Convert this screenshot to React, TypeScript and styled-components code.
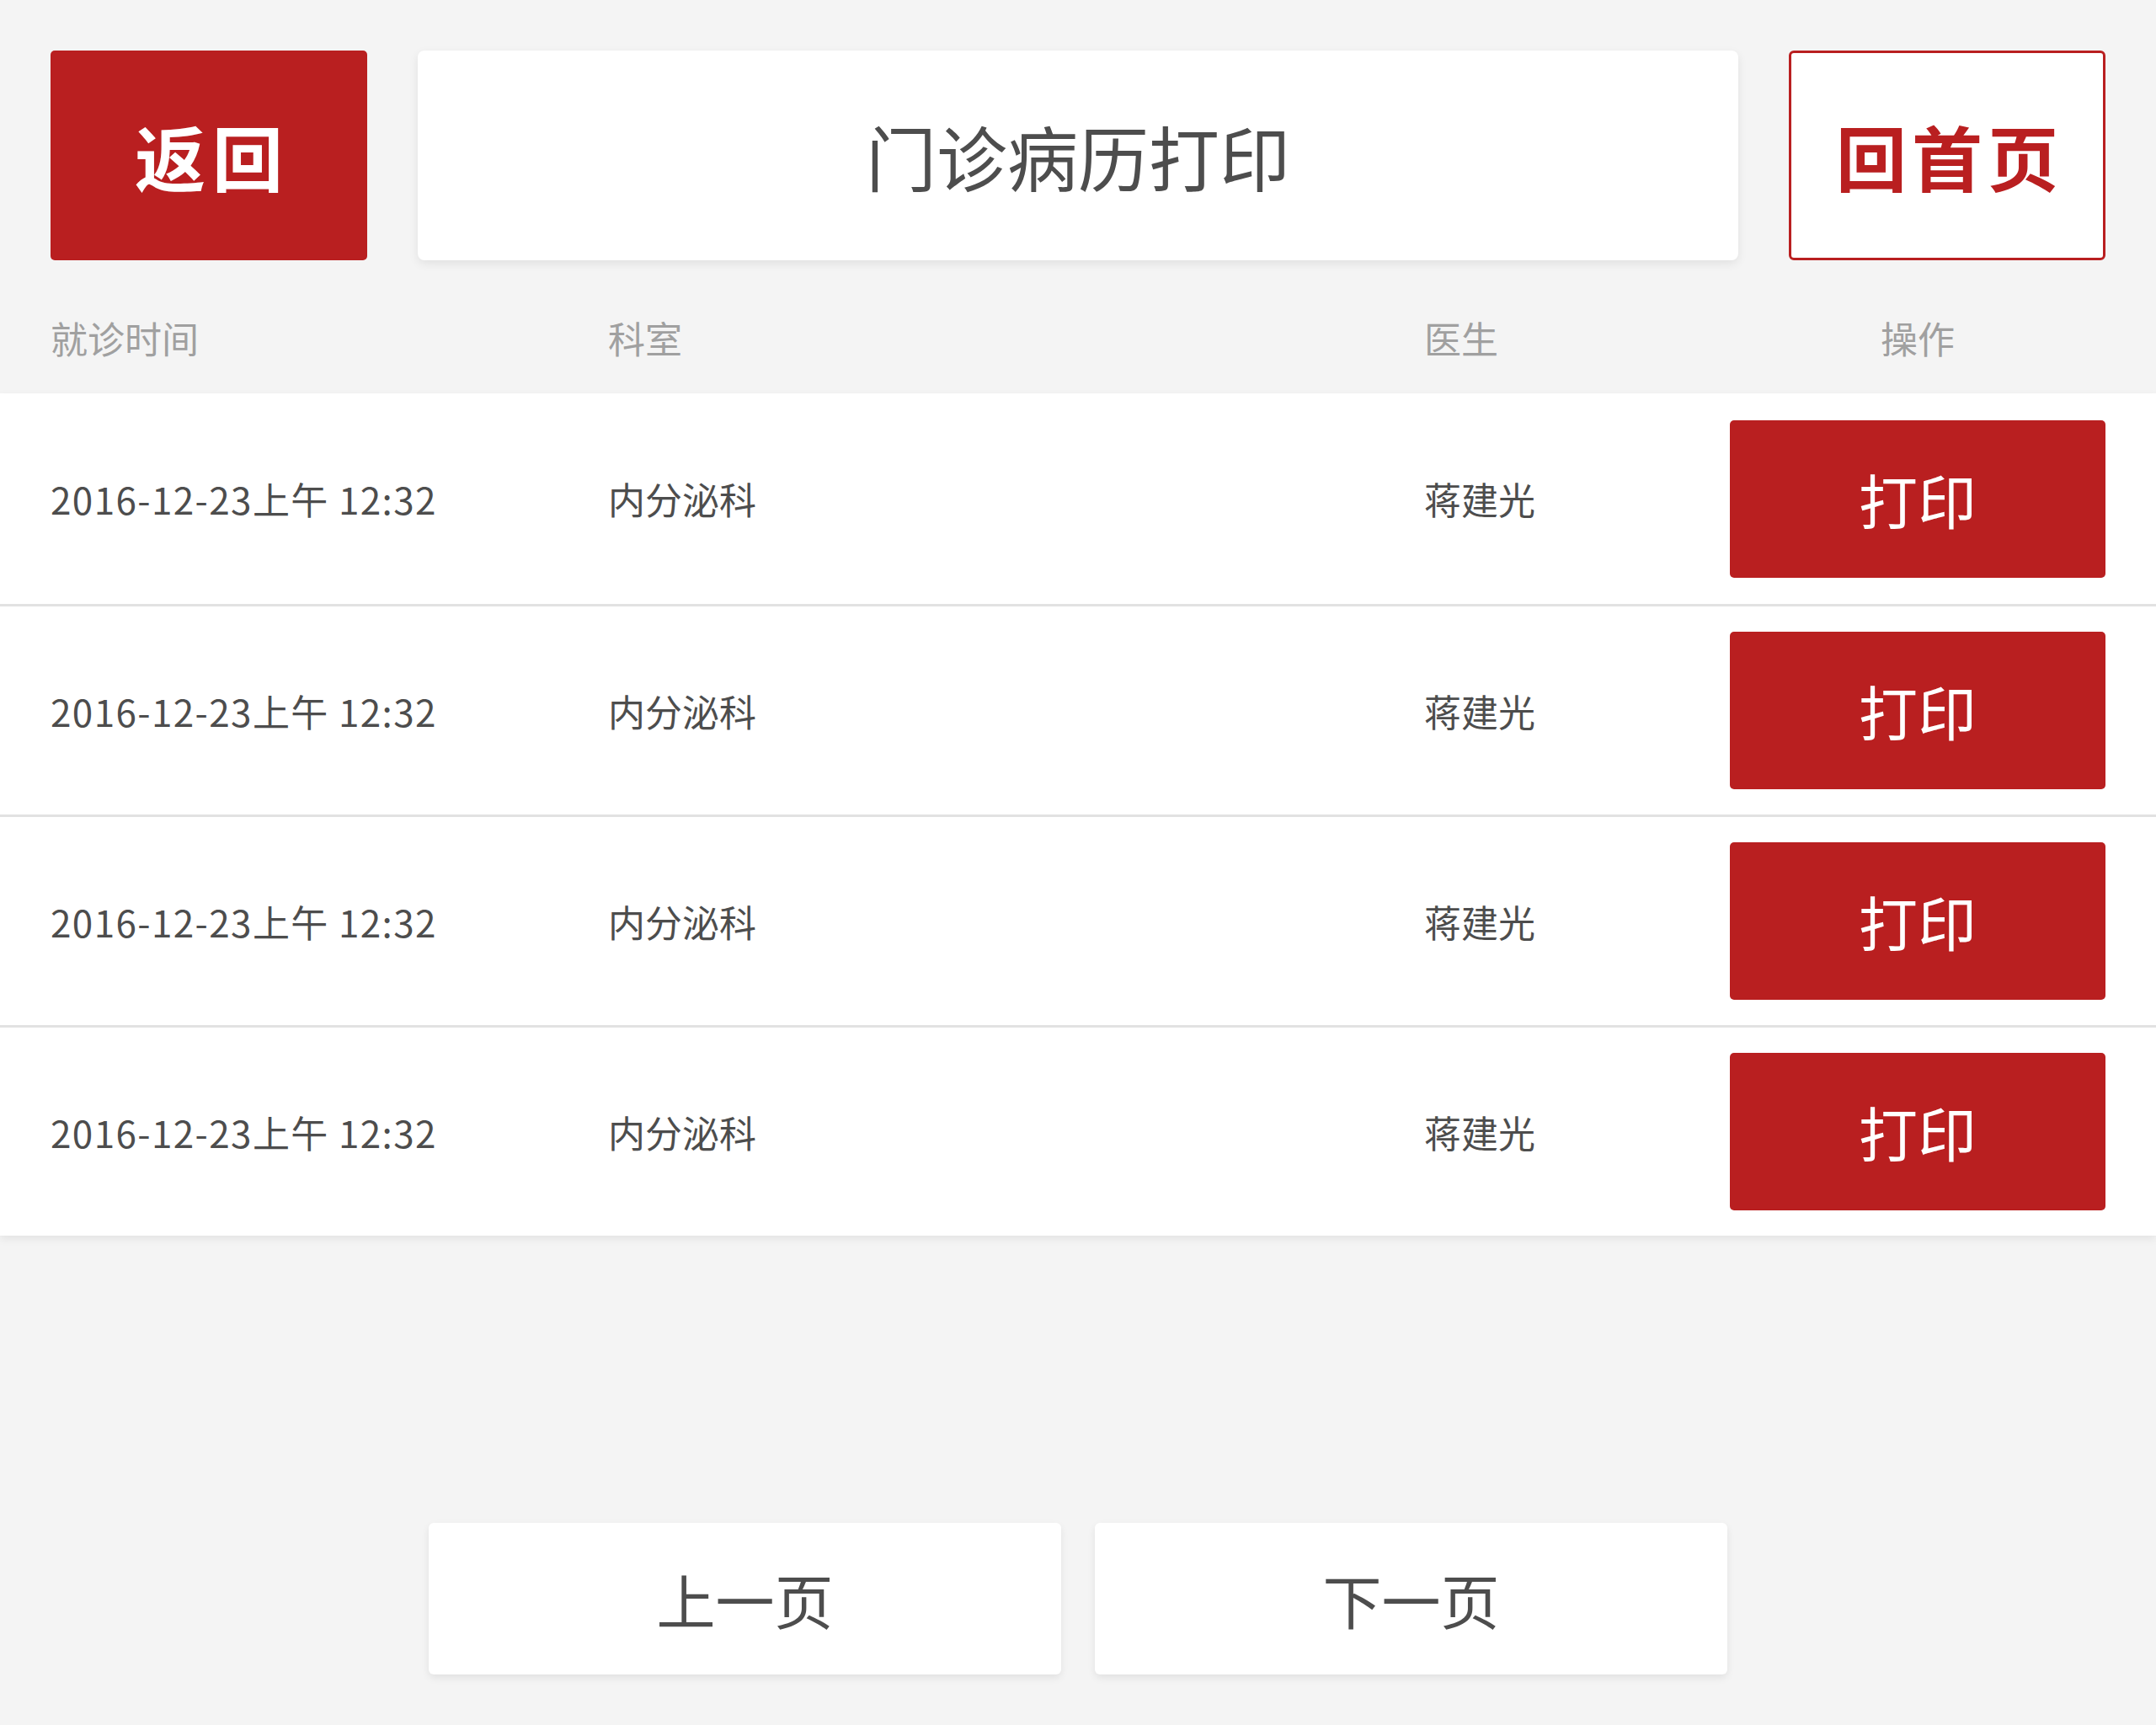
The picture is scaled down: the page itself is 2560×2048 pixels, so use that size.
import styled, { createGlobalStyle } from "styled-components";

const red = "#b91f20";
const ink = "#4d4d4d";

const GlobalStyle = createGlobalStyle`
  html, body {
    margin: 0;
    padding: 0;
    background: #f4f4f4;
  }
  * {
    box-sizing: border-box;
  }
  body {
    font-family: "Noto Sans CJK SC", "Noto Sans", sans-serif;
    color: ${ink};
  }
`;

const records = [
  { id: 1, time: "2016-12-23上午 12:32", dept: "内分泌科", doctor: "蒋建光" },
  { id: 2, time: "2016-12-23上午 12:32", dept: "内分泌科", doctor: "蒋建光" },
  { id: 3, time: "2016-12-23上午 12:32", dept: "内分泌科", doctor: "蒋建光" },
  { id: 4, time: "2016-12-23上午 12:32", dept: "内分泌科", doctor: "蒋建光" },
];

const App = () => {
  return (
    <>
      <GlobalStyle />
      <Page>
        <TopBar>
          <BackButton>返回</BackButton>
          <TitleBox>门诊病历打印</TitleBox>
          <HomeButton>回首页</HomeButton>
        </TopBar>

        <HeadRow>
          <HeadCell>就诊时间</HeadCell>
          <HeadCell>科室</HeadCell>
          <HeadCell>医生</HeadCell>
          <HeadCell $center>操作</HeadCell>
        </HeadRow>

        <Table>
          {records.map((item) => {
            return (
              <Row key={item.id}>
                <Cell $spaced>{item.time}</Cell>
                <Cell>{item.dept}</Cell>
                <Cell>{item.doctor}</Cell>
                <PrintButton>打印</PrintButton>
              </Row>
            );
          })}
        </Table>

        <Pager>
          <PageButton>上一页</PageButton>
          <PageButton>下一页</PageButton>
        </Pager>
      </Page>
    </>
  );
};

const Page = styled.div`
  display: flex;
  flex-direction: column;
  min-height: 100vh;
  padding-bottom: 60px;
`;

const TopBar = styled.header`
  display: grid;
  grid-template-columns: 376px 1fr 376px;
  gap: 60px;
  height: 249px;
  margin: 60px 60px 0 60px;
`;

const BackButton = styled.div`
  display: flex;
  align-items: center;
  justify-content: center;
  background: ${red};
  color: #fff;
  border-radius: 5px;
  font-size: 84px;
  font-weight: bold;
  letter-spacing: 8px;
  text-indent: 8px;
`;

const TitleBox = styled.div`
  display: flex;
  align-items: center;
  justify-content: center;
  background: #fff;
  border-radius: 8px;
  box-shadow: 0 4px 12px rgba(0, 0, 0, 0.08);
  font-size: 84px;
  color: ${ink};
`;

const HomeButton = styled.div`
  display: flex;
  align-items: center;
  justify-content: center;
  background: #fff;
  border: 3px solid ${red};
  border-radius: 6px;
  color: ${red};
  font-size: 84px;
  font-weight: bold;
  letter-spacing: 6px;
  text-indent: 6px;
`;

const columns = "662px 969px 1fr 446px";

const HeadRow = styled.div`
  display: grid;
  grid-template-columns: ${columns};
  align-items: center;
  height: 158px;
  padding: 26px 60px 0 60px;
`;

const HeadCell = styled.div<{ $center?: boolean }>`
  font-size: 44px;
  color: #a0a0a0;
  text-align: ${(p) => (p.$center ? "center" : "left")};
`;

const Table = styled.section`
  background: #fff;
  box-shadow: 0 4px 10px rgba(0, 0, 0, 0.07);
`;

const Row = styled.div`
  display: grid;
  grid-template-columns: ${columns};
  align-items: center;
  height: 250px;
  padding: 0 60px;
  & + & {
    border-top: 3px solid #e2e2e2;
  }
`;

const Cell = styled.div<{ $spaced?: boolean }>`
  font-size: 44px;
  color: ${ink};
  letter-spacing: ${(p) => (p.$spaced ? "1.4px" : "0")};
`;

const PrintButton = styled.div`
  display: flex;
  align-items: center;
  justify-content: center;
  height: 187px;
  background: ${red};
  border-radius: 5px;
  color: #fff;
  font-size: 70px;
`;

const Pager = styled.footer`
  display: flex;
  justify-content: center;
  gap: 40px;
  margin-top: auto;
`;

const PageButton = styled.div`
  display: flex;
  align-items: center;
  justify-content: center;
  width: 751px;
  height: 180px;
  background: #fff;
  border-radius: 6px;
  box-shadow: 0 4px 10px rgba(0, 0, 0, 0.08);
  font-size: 70px;
  color: ${ink};
`;

export default App;
